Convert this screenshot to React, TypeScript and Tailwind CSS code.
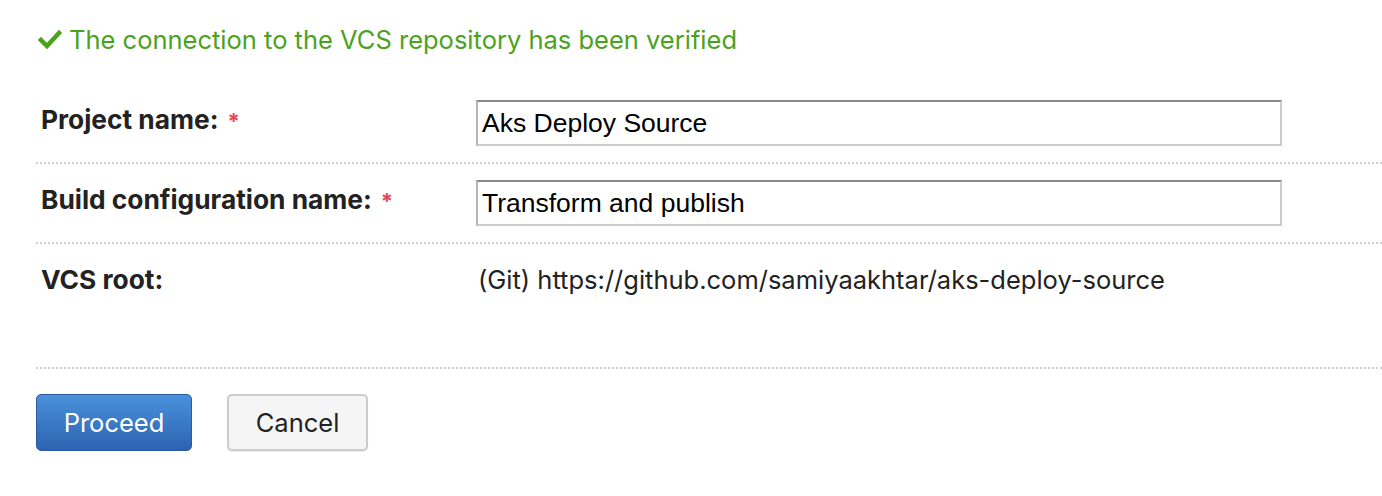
import React from "react";

const font = { fontFamily: 'Inter, "Liberation Sans", Arial, sans-serif' };

function Row({
  label,
  required,
  children,
  extra,
}: {
  label: string;
  required?: boolean;
  children: React.ReactNode;
  extra?: string;
}) {
  return (
    <div className={`flex border-b-2 border-dotted border-[#cfcfcf] ${extra ?? ""}`}>
      <div className="w-[440px] shrink-0 pl-[5px] pt-[21px] text-[26.3px] font-bold text-[#222] leading-[30px]">
        {label}
        {required && <span className="ml-[9px] text-[22px] text-[#e04a55]">*</span>}
      </div>
      <div className="flex-1">{children}</div>
    </div>
  );
}

function Input({ value }: { value: string }) {
  return (
    <div
      className="my-[16px] h-[46px] w-[806px] border-2 border-t-[#8a8a8a] border-l-[#b5b5b5] border-r-[#cccccc] border-b-[#cccccc] bg-white pl-[4px] text-[26.5px] leading-[42px] text-black"
      style={{ fontFamily: '"Liberation Sans", Arial, sans-serif' }}
    >
      {value}
    </div>
  );
}

export default function App() {
  return (
    <div className="h-[496px] w-[1382px] bg-white pl-[36px]" style={font}>
      <div className="flex h-[84px] items-start pt-[24px]">
        <div className="flex h-[32px] items-center text-[25.5px] text-[#4ba21c]">
          <svg width="24" height="20" viewBox="0 0 24 20" className="ml-[2px] mr-[7px]">
            <polyline
              points="3,10 9,16 21,3"
              fill="none"
              stroke="#4ba21c"
              strokeWidth="4.5"
              strokeLinecap="square"
            />
          </svg>
          The connection to the VCS repository has been verified
        </div>
      </div>
      <Row label="Project name:" required>
        <Input value="Aks Deploy Source" />
      </Row>
      <Row label="Build configuration name:" required>
        <Input value="Transform and publish" />
      </Row>
      <Row label="VCS root:" extra="h-[125px]">
        <div className="pl-[2px] pt-[21px] text-[25.5px] leading-[30px] text-[#222]">
          (Git) https://github.com/samiyaakhtar/aks-deploy-source
        </div>
      </Row>
      <div className="flex gap-[35px] pt-[25px]">
        <button className="h-[57px] w-[156px] rounded-[5px] border border-[#2a5aa3] bg-gradient-to-b from-[#4a92dc] to-[#2e62b0] pt-[2px] text-[25.5px] text-white">
          Proceed
        </button>
        <button className="h-[57px] w-[141px] rounded-[5px] border-2 border-[#cdcdcd] bg-[#f5f5f5] pt-[2px] text-[25.5px] text-[#222] shadow-[0_1px_1px_rgba(0,0,0,0.08)]">
          Cancel
        </button>
      </div>
    </div>
  );
}
